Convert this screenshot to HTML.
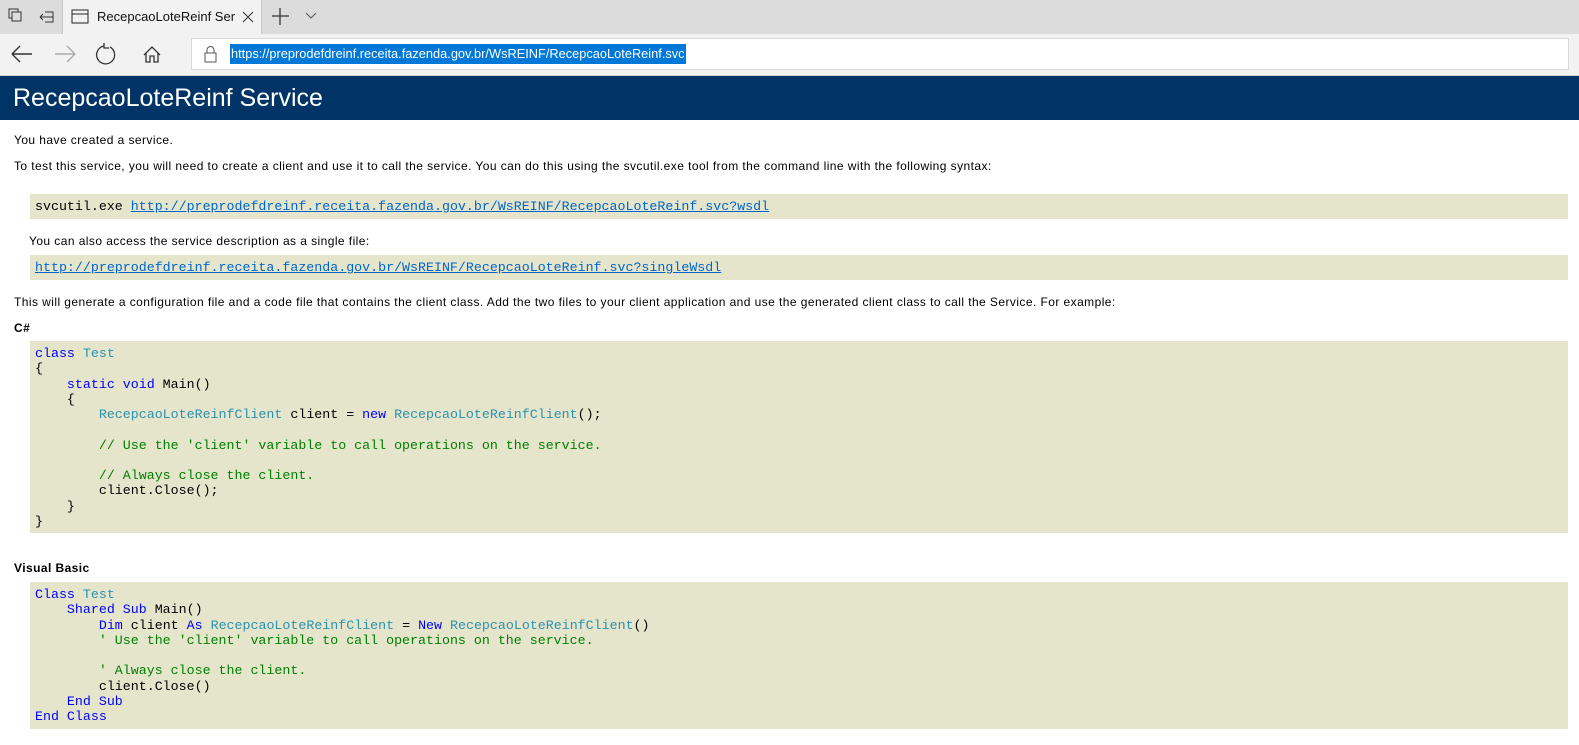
<!DOCTYPE html>
<html><head><meta charset="utf-8"><style>
*{margin:0;padding:0;box-sizing:border-box}
body{width:1579px;height:745px;overflow:hidden;background:#fff;font-family:"Liberation Sans",sans-serif;position:relative}
.tabs{position:absolute;left:0;top:0;width:1579px;height:34px;background:#dcdcdc}
.tab{position:absolute;left:62px;top:0;width:200px;height:34px;background:#f2f2f2;border-left:1px solid #c8c8c8;border-right:1px solid #c8c8c8}
.nav{position:absolute;left:0;top:34px;width:1579px;height:42px;background:#f2f2f2;border-bottom:1px solid #d0d0d0}
.url{position:absolute;left:191px;top:4px;width:1378px;height:32px;background:#fff;border:1px solid #d8d8d8}
.sel{position:absolute;left:230px;top:10px;height:20px;background:#0078d7;color:#fff;font-size:12.8px;line-height:20px;padding:0 1px}
.hdr{position:absolute;left:0;top:76px;width:1579px;height:44px;background:#003366;color:#fff;font-size:25px;line-height:44px;padding-left:13px}
.t{position:absolute;left:14px;font-size:12px;letter-spacing:0.43px;color:#000;white-space:nowrap}
.box{position:absolute;left:30px;width:1538px;background:#e5e5cc}
pre{font-family:"Liberation Mono",monospace;font-size:13.3px;line-height:15.25px;padding-left:5px}
a{color:#0066cc;text-decoration:underline}
.k{color:#0000ff}.y{color:#2b91af}.c{color:#008000}
svg{position:absolute}
</style></head><body>
<div class="tabs">
<svg width="60" height="34" style="left:0;top:0"><rect x="9" y="9" width="9" height="9" fill="none" stroke="#333"/><rect x="12" y="12" width="9" height="9" fill="#dcdcdc" stroke="#333"/><path d="M40 17h13M40 17l3-3M40 17l3 3M45 12h8v10h-8" fill="none" stroke="#333"/></svg>
<div class="tab"><svg width="20" height="20" style="left:8px;top:7px"><rect x="1" y="3" width="16" height="13" fill="none" stroke="#222"/><path d="M1 7h16" stroke="#222"/></svg>
<span style="position:absolute;left:34px;top:9px;font-size:13px;color:#111;width:138px;overflow:hidden;white-space:nowrap">RecepcaoLoteReinf Service</span>
<svg width="14" height="14" style="left:178px;top:10px"><path d="M2 2l10 10M12 2L2 12" stroke="#333"/></svg></div>
<svg width="60" height="34" style="left:266px;top:0"><path d="M14 8v17M6 16h17" stroke="#333" stroke-width="1.3"/><path d="M40 13l5 5 5-5" fill="none" stroke="#555"/></svg>
</div>
<div class="nav">
<svg width="180" height="40" style="left:0;top:0"><path d="M12 20h20M12 20l8-8M12 20l8 8" fill="none" stroke="#333" stroke-width="1.4"/><path d="M55 20h20M75 20l-8-8M75 20l-8 8" fill="none" stroke="#aaa" stroke-width="1.4"/><path d="M104 12a9 9 0 1 0 6 1M104 9v5h5" fill="none" stroke="#333" stroke-width="1.3"/><path d="M144 21l8-8 8 8M146 19v9h4v-6h4v6h4v-9" fill="none" stroke="#333" stroke-width="1.3"/></svg>
<div class="url"><svg width="20" height="24" style="left:10px;top:4px"><rect x="3" y="10" width="11" height="9" fill="none" stroke="#555"/><path d="M5 10V7a3.5 3.5 0 0 1 7 0v3" fill="none" stroke="#555"/></svg></div>
<div class="sel">https://preprodefdreinf.receita.fazenda.gov.br/WsREINF/RecepcaoLoteReinf.svc</div>
</div>
<div class="hdr">RecepcaoLoteReinf Service</div>
<div class="t" style="top:133px">You have created a service.</div>
<div class="t" style="top:159px">To test this service, you will need to create a client and use it to call the service. You can do this using the svcutil.exe tool from the command line with the following syntax:</div>
<div class="box" style="top:194px;height:25px"><pre style="padding-top:5px">svcutil.exe <a>http://preprodefdreinf.receita.fazenda.gov.br/WsREINF/RecepcaoLoteReinf.svc?wsdl</a></pre></div>
<div class="t" style="left:29px;top:234px">You can also access the service description as a single file:</div>
<div class="box" style="top:255px;height:25px"><pre style="padding-top:5px"><a>http://preprodefdreinf.receita.fazenda.gov.br/WsREINF/RecepcaoLoteReinf.svc?singleWsdl</a></pre></div>
<div class="t" style="top:295px">This will generate a configuration file and a code file that contains the client class. Add the two files to your client application and use the generated client class to call the Service. For example:</div>
<div class="t" style="top:321px;font-weight:bold">C#</div>
<div class="box" style="top:341px;height:192px"><pre style="padding-top:5px"><span class="k">class</span> <span class="y">Test</span>
{
    <span class="k">static void</span> Main()
    {
        <span class="y">RecepcaoLoteReinfClient</span> client = <span class="k">new</span> <span class="y">RecepcaoLoteReinfClient</span>();

        <span class="c">// Use the 'client' variable to call operations on the service.</span>

        <span class="c">// Always close the client.</span>
        client.Close();
    }
}</pre></div>
<div class="t" style="top:561px;font-weight:bold">Visual Basic</div>
<div class="box" style="top:582px;height:147px"><pre style="padding-top:5px"><span class="k">Class</span> <span class="y">Test</span>
    <span class="k">Shared Sub</span> Main()
        <span class="k">Dim</span> client <span class="k">As</span> <span class="y">RecepcaoLoteReinfClient</span> = <span class="k">New</span> <span class="y">RecepcaoLoteReinfClient</span>()
        <span class="c">' Use the 'client' variable to call operations on the service.</span>

        <span class="c">' Always close the client.</span>
        client.Close()
    <span class="k">End Sub</span>
<span class="k">End Class</span></pre></div>
</body></html>
